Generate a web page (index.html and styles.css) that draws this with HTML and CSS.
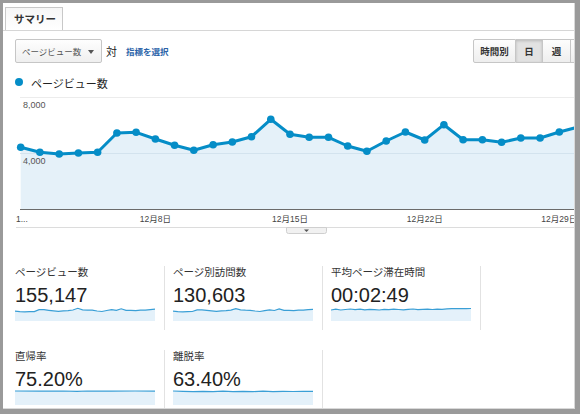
FILE: index.html
```html
<!DOCTYPE html>
<html lang="ja">
<head>
<meta charset="utf-8">
<title>サマリー</title>
<link rel="stylesheet" href="styles.css">
</head>
<body>
<div class="panel">
  <div class="tabs"><div class="tab">サマリー</div></div>
  <div class="toolbar">
    <div class="select">ページビュー数<span class="caret"></span></div>
    <span class="vs">対</span>
    <a class="link">指標を選択</a>
    <div class="btngroup">
      <span class="btn w1">時間別</span><span class="btn w2 on">日</span><span class="btn w3">週</span><span class="btn w4">月</span>
    </div>
  </div>
  <div class="legend"><span class="dot"></span>ページビュー数</div>
  <svg class="chart" width="572" height="145" viewBox="3 90 572 145">
    <line x1="20" y1="97.5" x2="575" y2="97.5" stroke="#ececec" stroke-width="1"/>
    <polygon fill="#e5f1f9" points="20.7,147.3 39.9,152.3 59.2,154 78.4,153 97.6,152.3 116.9,133 136.1,132.3 155.4,139 174.6,145.3 193.8,150.3 213.1,144.7 232.3,142 251.5,136.7 270.8,119.3 290,134.3 309.2,137.3 328.5,137.3 347.7,146 366.9,151.3 386.2,141 405.4,132 424.7,140 443.9,124.7 463.1,139.7 482.4,139.7 501.6,142.3 520.8,138 540.1,138 559.3,132 578.5,127 578.5,209 20.7,209"/>
    <line x1="20" y1="153.5" x2="575" y2="153.5" stroke="#d3e3ee" stroke-width="1"/>
    <line x1="20" y1="209.5" x2="575" y2="209.5" stroke="#6b6b6b" stroke-width="1.2"/>
    <text x="23" y="108" class="ax">8,000</text>
    <text x="23" y="164" class="ax">4,000</text>
    <polyline fill="none" stroke="#058dc7" stroke-width="3" stroke-linejoin="round" points="20.7,147.3 39.9,152.3 59.2,154 78.4,153 97.6,152.3 116.9,133 136.1,132.3 155.4,139 174.6,145.3 193.8,150.3 213.1,144.7 232.3,142 251.5,136.7 270.8,119.3 290,134.3 309.2,137.3 328.5,137.3 347.7,146 366.9,151.3 386.2,141 405.4,132 424.7,140 443.9,124.7 463.1,139.7 482.4,139.7 501.6,142.3 520.8,138 540.1,138 559.3,132 578.5,127"/>
    <g fill="#058dc7">
      <circle cx="20.7" cy="147.3" r="3.8"/><circle cx="39.9" cy="152.3" r="3.8"/><circle cx="59.2" cy="154" r="3.8"/><circle cx="78.4" cy="153" r="3.8"/><circle cx="97.6" cy="152.3" r="3.8"/><circle cx="116.9" cy="133" r="3.8"/><circle cx="136.1" cy="132.3" r="3.8"/><circle cx="155.4" cy="139" r="3.8"/><circle cx="174.6" cy="145.3" r="3.8"/><circle cx="193.8" cy="150.3" r="3.8"/><circle cx="213.1" cy="144.7" r="3.8"/><circle cx="232.3" cy="142" r="3.8"/><circle cx="251.5" cy="136.7" r="3.8"/><circle cx="270.8" cy="119.3" r="3.8"/><circle cx="290" cy="134.3" r="3.8"/><circle cx="309.2" cy="137.3" r="3.8"/><circle cx="328.5" cy="137.3" r="3.8"/><circle cx="347.7" cy="146" r="3.8"/><circle cx="366.9" cy="151.3" r="3.8"/><circle cx="386.2" cy="141" r="3.8"/><circle cx="405.4" cy="132" r="3.8"/><circle cx="424.7" cy="140" r="3.8"/><circle cx="443.9" cy="124.7" r="3.8"/><circle cx="463.1" cy="139.7" r="3.8"/><circle cx="482.4" cy="139.7" r="3.8"/><circle cx="501.6" cy="142.3" r="3.8"/><circle cx="520.8" cy="138" r="3.8"/><circle cx="540.1" cy="138" r="3.8"/><circle cx="559.3" cy="132" r="3.8"/><circle cx="578.5" cy="127" r="3.8"/>
    </g>
    <text x="16" y="222" class="xl">1...</text>
    <text x="155.4" y="222" class="xl" text-anchor="middle">12月8日</text>
    <text x="290" y="222" class="xl" text-anchor="middle">12月15日</text>
    <text x="424.7" y="222" class="xl" text-anchor="middle">12月22日</text>
    <text x="559.3" y="222" class="xl" text-anchor="middle">12月29日</text>
    <line x1="16" y1="227.5" x2="575" y2="227.5" stroke="#dcdcdc" stroke-width="1"/>
    <path d="M286.5 227.5 h40 v4 a2 2 0 0 1 -2 2 h-36 a2 2 0 0 1 -2 -2 z" fill="#f1f1f1" stroke="#cfcfcf" stroke-width="1"/>
    <path d="M304 229.5 h5 l-2.5 2.5 z" fill="#555"/>
  </svg>
  <div class="metrics">
    <div class="cell">
      <div class="label">ページビュー数</div>
      <div class="value">155,147</div>
      <svg class="spark" viewBox="0 0 140 16" preserveAspectRatio="none">
        <polygon class="sf" points="0,6.1 4.8,6.6 9.7,6.8 14.5,6.7 19.3,6.6 24.1,4.7 29,4.6 33.8,5.3 38.6,5.9 43.4,6.4 48.3,5.8 53.1,5.6 57.9,5 62.8,3.3 67.6,4.8 72.4,5.1 77.2,5.1 82.1,6 86.9,6.5 91.7,5.5 96.6,4.6 101.4,5.4 106.2,3.8 111,5.3 115.9,5.3 120.7,5.6 125.5,5.2 130.3,5.2 135.2,4.6 140,4.1 140,16 0,16"/>
        <polyline class="sl" points="0,6.1 4.8,6.6 9.7,6.8 14.5,6.7 19.3,6.6 24.1,4.7 29,4.6 33.8,5.3 38.6,5.9 43.4,6.4 48.3,5.8 53.1,5.6 57.9,5 62.8,3.3 67.6,4.8 72.4,5.1 77.2,5.1 82.1,6 86.9,6.5 91.7,5.5 96.6,4.6 101.4,5.4 106.2,3.8 111,5.3 115.9,5.3 120.7,5.6 125.5,5.2 130.3,5.2 135.2,4.6 140,4.1"/>
      </svg>
    </div>
    <div class="cell">
      <div class="label">ページ別訪問数</div>
      <div class="value">130,603</div>
      <svg class="spark" viewBox="0 0 140 16" preserveAspectRatio="none">
        <polygon class="sf" points="0,6.2 4.8,6.6 9.7,6.8 14.5,6.7 19.3,6.5 24.1,4.9 29,4.8 33.8,5.4 38.6,5.9 43.4,6.3 48.3,5.9 53.1,5.6 57.9,5.1 62.8,3.6 67.6,4.9 72.4,5.2 77.2,5.3 82.1,6 86.9,6.5 91.7,5.6 96.6,4.8 101.4,5.5 106.2,3.9 111,5.3 115.9,5.4 120.7,5.6 125.5,5.2 130.3,5.1 135.2,4.6 140,4.3 140,16 0,16"/>
        <polyline class="sl" points="0,6.2 4.8,6.6 9.7,6.8 14.5,6.7 19.3,6.5 24.1,4.9 29,4.8 33.8,5.4 38.6,5.9 43.4,6.3 48.3,5.9 53.1,5.6 57.9,5.1 62.8,3.6 67.6,4.9 72.4,5.2 77.2,5.3 82.1,6 86.9,6.5 91.7,5.6 96.6,4.8 101.4,5.5 106.2,3.9 111,5.3 115.9,5.4 120.7,5.6 125.5,5.2 130.3,5.1 135.2,4.6 140,4.3"/>
      </svg>
    </div>
    <div class="cell">
      <div class="label">平均ページ滞在時間</div>
      <div class="value">00:02:49</div>
      <svg class="spark" viewBox="0 0 140 16" preserveAspectRatio="none">
        <polygon class="sf" points="0,5 4.8,4.2 9.7,5 14.5,4.5 19.3,4 24.1,4.6 29,4.2 33.8,4.8 38.6,4.3 43.4,4.6 48.3,5 53.1,4.4 57.9,4.7 62.8,4.2 67.6,4.5 72.4,4.8 77.2,4.3 82.1,4 86.9,4.6 91.7,4.3 96.6,4.1 101.4,4.5 106.2,4.2 111,4.4 115.9,3.8 120.7,3.6 125.5,3.7 130.3,3.5 135.2,3.6 140,3.5 140,16 0,16"/>
        <polyline class="sl" points="0,5 4.8,4.2 9.7,5 14.5,4.5 19.3,4 24.1,4.6 29,4.2 33.8,4.8 38.6,4.3 43.4,4.6 48.3,5 53.1,4.4 57.9,4.7 62.8,4.2 67.6,4.5 72.4,4.8 77.2,4.3 82.1,4 86.9,4.6 91.7,4.3 96.6,4.1 101.4,4.5 106.2,4.2 111,4.4 115.9,3.8 120.7,3.6 125.5,3.7 130.3,3.5 135.2,3.6 140,3.5"/>
      </svg>
    </div>
    <div class="cell">
      <div class="label">直帰率</div>
      <div class="value">75.20%</div>
      <svg class="spark" viewBox="0 0 140 16" preserveAspectRatio="none">
        <polygon class="sf" points="0,2 24,2.1 48,2 62,2.3 72,2 96,2.1 120,2 140,2.1 140,16 0,16"/>
        <polyline class="sl" points="0,2 24,2.1 48,2 62,2.3 72,2 96,2.1 120,2 140,2.1"/>
      </svg>
    </div>
    <div class="cell">
      <div class="label">離脱率</div>
      <div class="value">63.40%</div>
      <svg class="spark" viewBox="0 0 140 16" preserveAspectRatio="none">
        <polygon class="sf" points="0,2 10,2.4 20,2.6 30,2.3 40,2.6 50,2.2 60,2.7 70,2.4 80,2.6 90,2.2 100,2.6 110,2.4 120,2.5 130,2.3 140,2.4 140,16 0,16"/>
        <polyline class="sl" points="0,2 10,2.4 20,2.6 30,2.3 40,2.6 50,2.2 60,2.7 70,2.4 80,2.6 90,2.2 100,2.6 110,2.4 120,2.5 130,2.3 140,2.4"/>
      </svg>
    </div>
  </div>
</div>
</body>
</html>
```

FILE: styles.css
```css
* { box-sizing: border-box; }
html, body { margin: 0; }
body {
  background: #9a9a9a;
  font-family: "Liberation Sans", "Noto Sans CJK JP", sans-serif;
  width: 580px;
  height: 414px;
  overflow: hidden;
  padding: 3px 0 0 3px;
}
.panel {
  width: 572px;
  height: 406px;
  background: #fff;
  border-right: 1px solid #d9d9d9;
  border-bottom: 1px solid #d9d9d9;
  overflow: hidden;
}
.tabs {
  display: flex;
  height: 28px;
  padding: 4px 0 0 2px;
  border-bottom: 1px solid #d6d6d6;
}
.tab {
  width: 58px;
  height: 23px;
  border: 1px solid #c8c8c8;
  border-bottom: none;
  background: linear-gradient(#f6f6f6, #ffffff);
  font-weight: bold;
  font-size: 10.5px;
  line-height: 22px;
  color: #333;
  padding-left: 8px;
}
.toolbar {
  display: flex;
  align-items: center;
  height: 32px;
  padding: 8px 0 0 12px;
}
.select {
  position: relative;
  width: 87px;
  height: 24px;
  border: 1px solid #c6c6c6;
  border-radius: 2px;
  background: linear-gradient(#fefefe, #efefef);
  display: flex;
  align-items: center;
  padding-left: 6px;
  font-size: 8.5px;
  color: #555;
}
.caret {
  position: absolute;
  right: 7px;
  top: 10px;
  width: 0;
  height: 0;
  border-left: 3.5px solid transparent;
  border-right: 3.5px solid transparent;
  border-top: 4px solid #555;
}
.vs {
  margin-left: 4px;
  font-size: 11px;
  color: #222;
}
.link {
  margin-left: 9px;
  font-size: 8.5px;
  font-weight: bold;
  color: #2a62a8;
}
.btngroup {
  display: flex;
  flex-shrink: 0;
  margin-left: auto;
  margin-right: -27px;
}
.btn {
  height: 24px;
  border: 1px solid #c6c6c6;
  border-left: none;
  background: linear-gradient(#fdfdfd, #eeeeee);
  font-size: 9.5px;
  font-weight: bold;
  color: #333;
  display: flex;
  align-items: center;
  justify-content: center;
}
.btn.w1 { width: 43px; border-left: 1px solid #c6c6c6; border-radius: 2px 0 0 2px; }
.btn.w2 { width: 27px; }
.btn.w3 { width: 28px; }
.btn.w4 { width: 30px; }
.btn.on {
  background: #e2e2e2;
  box-shadow: inset 0 1px 3px rgba(0,0,0,0.18);
}
.legend {
  display: flex;
  align-items: center;
  height: 14px;
  margin: 13px 0 0 12px;
  font-size: 11px;
  color: #222;
}
.dot {
  width: 8px;
  height: 8px;
  border-radius: 50%;
  background: #058dc7;
  margin-right: 8px;
  margin-top: -2px;
}
.chart { display: block; }
.ax { font-size: 9px; fill: #555; font-family: "Liberation Sans", sans-serif; }
.xl { font-size: 8.5px; fill: #444; font-family: "Liberation Sans", "Noto Sans CJK JP", sans-serif; }
.metrics {
  display: grid;
  grid-template-columns: repeat(3, 158px);
  row-gap: 20px;
  margin-top: 31px;
  padding-left: 4px;
}
.cell {
  height: 64px;
  padding: 0 8px;
  border-right: 1px solid #e2e2e2;
}
.label {
  font-size: 10.5px;
  line-height: 13px;
  color: #333;
  white-space: nowrap;
}
.value {
  font-size: 20px;
  line-height: 20px;
  color: #222;
  margin-top: 6px;
}
.spark { display: block; width: 140px; height: 16px; }
.sf { fill: #e4f1fa; }
.sl { fill: none; stroke: #3a9fd6; stroke-width: 1.2; vector-effect: non-scaling-stroke; }
```
